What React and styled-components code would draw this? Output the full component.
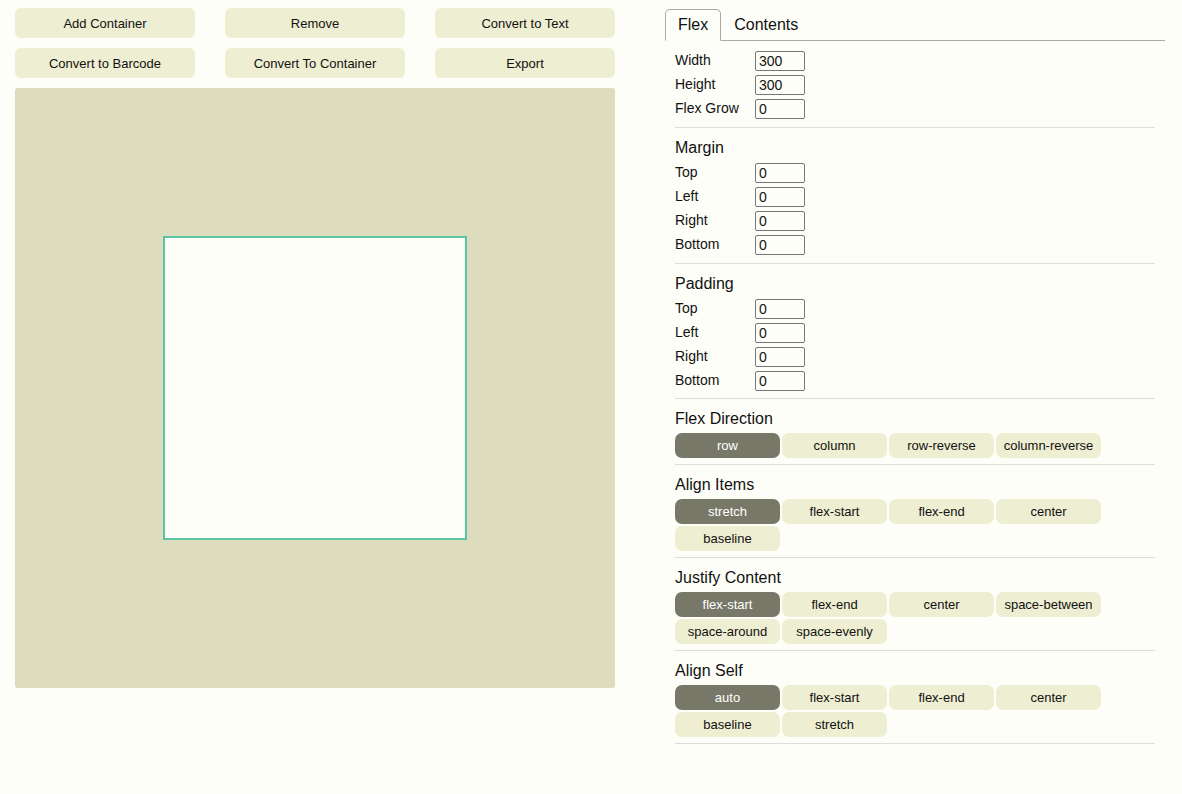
import styled, { createGlobalStyle } from "styled-components";

const GlobalStyle = createGlobalStyle`
    body {
        margin: 0;
        background: #fefef8;
        font-family: "Liberation Sans", Arial, sans-serif;
        color: #111;
    }
`

const toolbarButtons = [
    "Add Container", "Remove", "Convert to Text",
    "Convert to Barcode", "Convert To Container", "Export",
];

const sizeFields = [["Width", "300"], ["Height", "300"], ["Flex Grow", "0"]];
const sides = ["Top", "Left", "Right", "Bottom"];

const optionGroups = [
    { title: "Flex Direction", options: ["row", "column", "row-reverse", "column-reverse"], active: "row" },
    { title: "Align Items", options: ["stretch", "flex-start", "flex-end", "center", "baseline"], active: "stretch" },
    { title: "Justify Content", options: ["flex-start", "flex-end", "center", "space-between", "space-around", "space-evenly"], active: "flex-start" },
    { title: "Align Self", options: ["auto", "flex-start", "flex-end", "center", "baseline", "stretch"], active: "auto" },
];

const FieldRows = ({ fields }) => (
    <Rows>
        {fields.map(([label, value]) => (
            <Row key={label}>
                <Label>{label}</Label>
                <Input defaultValue={value} />
            </Row>
        ))}
    </Rows>
);

const App = () => {
    return (
        <>
            <GlobalStyle />
            <Page>
                <Editor>
                    <Toolbar>
                        {toolbarButtons.map((b) => (
                            <ToolButton key={b}>{b}</ToolButton>
                        ))}
                    </Toolbar>
                    <Canvas>
                        <Box />
                    </Canvas>
                </Editor>
                <Panel>
                    <Tabs>
                        <Tab $active>Flex</Tab>
                        <Tab>Contents</Tab>
                    </Tabs>
                    <Body>
                        <Section>
                            <FieldRows fields={sizeFields} />
                        </Section>
                        <Section>
                            <Heading $tight>Margin</Heading>
                            <FieldRows fields={sides.map((s) => [s, "0"])} />
                        </Section>
                        <Section $last>
                            <Heading $tight>Padding</Heading>
                            <FieldRows fields={sides.map((s) => [s, "0"])} />
                        </Section>
                        {optionGroups.map((g) => (
                            <Section key={g.title} $compact>
                                <Heading>{g.title}</Heading>
                                <Options>
                                    {g.options.map((o) => (
                                        <Option key={o} $active={o === g.active}>{o}</Option>
                                    ))}
                                </Options>
                            </Section>
                        ))}
                    </Body>
                </Panel>
            </Page>
        </>
    )
};

const Page = styled.div`
    display: flex;
    align-items: flex-start;
    gap: 50px;
    padding: 8px 15px;
`

const Editor = styled.div`
    width: 600px;
    display: flex;
    flex-direction: column;
    gap: 10px;
`

const Toolbar = styled.div`
    display: grid;
    grid-template-columns: repeat(3, 180px);
    column-gap: 30px;
    row-gap: 10px;
`

const ToolButton = styled.button`
    height: 30px;
    border: none;
    border-radius: 6px;
    background: #eeeed2;
    font-family: "Liberation Sans", Arial, sans-serif;
    font-size: 13px;
    color: #111;
    padding: 0;
`

const Canvas = styled.div`
    height: 600px;
    border-radius: 3px;
    background: #dddcbe;
    display: flex;
    align-items: center;
    justify-content: center;
`

const Box = styled.div`
    width: 300px;
    height: 300px;
    border: 2px solid #5cc4a0;
    background: #fefef8;
`

const Panel = styled.div`
    width: 500px;
    padding-top: 1px;
`

const Tabs = styled.div`
    display: flex;
    border-bottom: 1px solid #aaa;
`

const Tab = styled.div`
    height: 30px;
    line-height: 30px;
    padding: 0 ${(p) => (p.$active ? "12px" : "10px")} 0 12px;
    font-size: 16px;
    margin-bottom: -1px;
    border: 1px solid ${(p) => (p.$active ? "#aaa" : "transparent")};
    border-bottom: 1px solid ${(p) => (p.$active ? "#fefef8" : "transparent")};
    border-radius: 5px 5px 0 0;
    background: ${(p) => (p.$active ? "#fefef8" : "transparent")};
`

const Body = styled.div`
    padding: 0 10px;
`

const Section = styled.div`
    padding: ${(p) => (p.$compact ? "10px 0 6px" : p.$last ? "10px 0 7px" : "10px 0 8px")};
    border-bottom: 1px solid #dddddd;
`

const Heading = styled.div`
    font-size: 16px;
    line-height: 20px;
    margin-bottom: ${(p) => (p.$tight ? "5px" : "4px")};
`

const Rows = styled.div`
    display: flex;
    flex-direction: column;
    gap: 4px;
`

const Row = styled.div`
    display: flex;
    align-items: center;
    height: 20px;
`

const Label = styled.span`
    width: 80px;
    font-size: 14px;
    line-height: 16px;
    margin-top: -2px;
`

const Input = styled.input`
    box-sizing: border-box;
    width: 50px;
    height: 20px;
    border: 1px solid #767676;
    border-radius: 2px;
    padding: 0 3px;
    background: #fefef8;
    font-family: "Liberation Sans", Arial, sans-serif;
    font-size: 14px;
    color: #111;
`

const Options = styled.div`
    display: flex;
    flex-wrap: wrap;
    gap: 2px;
`

const Option = styled.button`
    width: 105px;
    height: 25px;
    border: none;
    border-radius: 7px;
    padding: 0;
    background: ${(p) => (p.$active ? "#787868" : "#eeeed2")};
    color: ${(p) => (p.$active ? "#fff" : "#111")};
    font-family: "Liberation Sans", Arial, sans-serif;
    font-size: 13px;
`

export default App;
